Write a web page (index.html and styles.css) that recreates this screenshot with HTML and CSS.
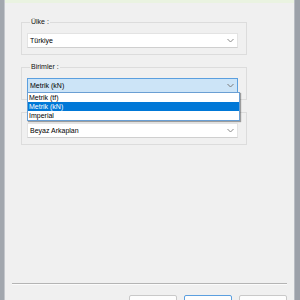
FILE: index.html
```html
<!DOCTYPE html>
<html lang="tr">
<head>
    <meta charset="UTF-8">
    <title>Ayarlar</title>
    <link rel="stylesheet" href="styles.css">
</head>
<body>
    <div class="frame">
        <div class="edge edge-left"></div>
        <div class="dialog">
            <div class="topbar"></div>

            <fieldset class="group">
                <legend>Ülke :</legend>
                <div class="combo">
                    <span>Türkiye</span>
                    <svg class="chev" width="7" height="5" viewBox="0 0 7 5"><path d="M0.5 1 L3.5 4 L6.5 1" fill="none" stroke="#8a8a8a" stroke-width="1"/></svg>
                </div>
            </fieldset>

            <fieldset class="group">
                <legend>Birimler :</legend>
                <div class="combo combo-open">
                    <span>Metrik (kN)</span>
                    <svg class="chev" width="7" height="5" viewBox="0 0 7 5"><path d="M0.5 1 L3.5 4 L6.5 1" fill="none" stroke="#7a7a7a" stroke-width="1"/></svg>
                    <!-- açılmış liste -->
                    <ul class="droplist">
                        <li>Metrik (tf)</li>
                        <li class="sel">Metrik (kN)</li>
                        <li>Imperial</li>
                    </ul>
                </div>
            </fieldset>

            <fieldset class="group">
                <legend>Arkaplan :</legend>
                <div class="combo">
                    <span>Beyaz Arkaplan</span>
                    <svg class="chev" width="7" height="5" viewBox="0 0 7 5"><path d="M0.5 1 L3.5 4 L6.5 1" fill="none" stroke="#8a8a8a" stroke-width="1"/></svg>
                </div>
            </fieldset>

            <div class="footer">
                <div class="sep"></div>
                <div class="buttons">
                    <button class="btn">Yardım</button>
                    <button class="btn btn-focus">Tamam</button>
                    <button class="btn">İptal</button>
                </div>
            </div>
        </div>
        <div class="edge edge-right"></div>
    </div>
</body>
</html>
```

FILE: styles.css
```css
html, body {
    margin: 0;
    padding: 0;
}
body {
    font-family: "Liberation Sans", Arial, sans-serif;
    font-size: 7px;
    color: #111;
    background-color: #f0f0f0;
}
.frame {
    display: flex;
    width: 300px;
    height: 300px;
    overflow: hidden;
}
.edge {
    flex: none;
    background-color: #a2a7ae;
}
.edge-left {
    width: 5px;
    border-right: 1px solid #c4c7cc;
    box-sizing: border-box;
}
.edge-right {
    width: 6px;
    border-left: 1px solid #b9bdc3;
    box-sizing: border-box;
    background-color: #9ca1a9;
}
.dialog {
    flex: 1;
    display: flex;
    flex-direction: column;
    background-color: #f0f0f0;
}
.topbar {
    height: 3px;
    background-color: #eaf3e1;
    flex: none;
}
.group {
    margin: 15px 0 0 16px;
    padding: 7px 8px 6px 5px;
    width: 226px;
    box-sizing: border-box;
    border: 1px solid #dcdcdc;
    min-inline-size: 0;
}
.group + .group {
    margin-top: 8px;
}
.group legend {
    padding: 0 1px;
    margin-left: 3px;
    line-height: 8px;
    height: 8px;
}
.combo {
    position: relative;
    height: 15px;
    box-sizing: border-box;
    display: flex;
    align-items: center;
    justify-content: space-between;
    padding: 0 3px 0 2px;
    background-color: #fff;
    border: 1px solid #e3e3e3;
    border-bottom-color: #cfcfcf;
    color: #000;
}
.combo span {
    line-height: 8px;
}
.chev {
    display: block;
}
.combo-open {
    background-color: #cce4f7;
    border-color: #5b9fdf;
}
.droplist {
    position: absolute;
    left: -1px;
    top: 13px;
    width: 211px;
    margin: 0;
    padding: 0;
    list-style: none;
    background-color: #fff;
    border: 1px solid #6a9fd3;
    box-shadow: 1px 1px 1px rgba(0, 0, 0, 0.35);
    z-index: 2;
}
.droplist li {
    height: 9px;
    line-height: 9px;
    padding-left: 1px;
}
.droplist li.sel {
    background-color: #0078d7;
    color: #fff;
}
.footer {
    margin-top: 138px;
    flex: none;
}
.sep {
    height: 1px;
    margin: 0 7px;
    background-color: #b4b4b4;
    border-bottom: 1px solid #fbfbfb;
}
.buttons {
    display: flex;
    justify-content: flex-end;
    gap: 7px;
    margin: 10px 7px 0 0;
}
.btn {
    width: 48px;
    height: 20px;
    font-family: "Liberation Sans", Arial, sans-serif;
    font-size: 7px;
    background-color: #fdfdfd;
    border: 1px solid #c9c9c9;
    border-radius: 2px;
    padding: 0;
}
.btn-focus {
    border-color: #5b9fdf;
}
```
